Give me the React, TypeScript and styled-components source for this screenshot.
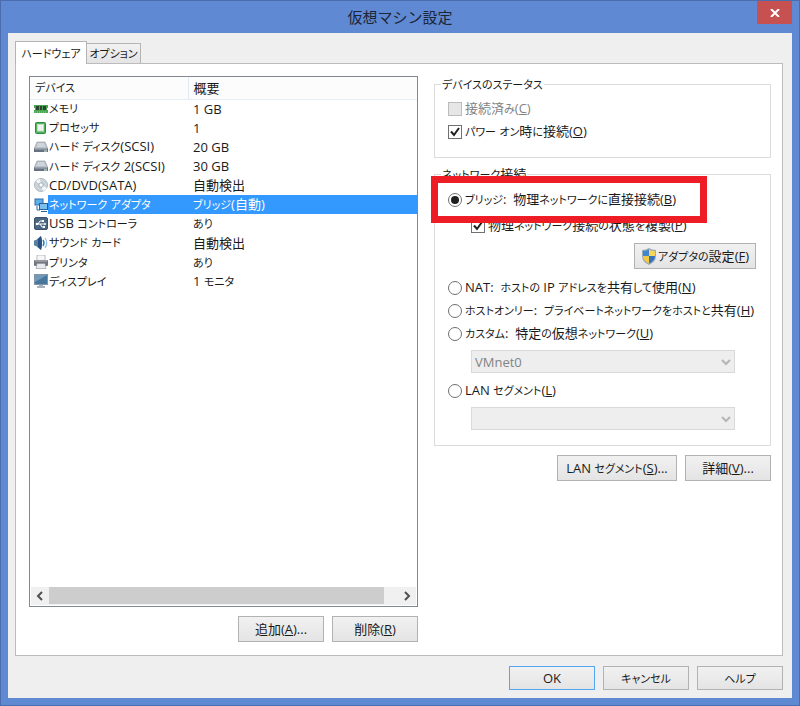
import React, { useState } from "react";
import styled, { createGlobalStyle, css } from "styled-components";

const GlobalStyle = createGlobalStyle`
  *, *::before, *::after { box-sizing: border-box; }
  body { margin: 0; }
  body, button, input, select {
    font: 13px/18px "Open Sans", "Noto Sans CJK JP", sans-serif;
    font-feature-settings: "palt";
    color: #1a1a1a;
  }
`;

const Window = styled.main`
  display: flex;
  flex-direction: column;
  min-height: 100vh;
  padding: 0 7px 7px;
  border: 1px solid #4b6dab;
  background: #6089d3;
`;

const TitleBar = styled.header`
  display: grid;
  grid-template-columns: 35px 1fr 35px;
  height: 32px;
  flex: none;
`;

const Title = styled.h1`
  grid-column: 2;
  margin: 0;
  font-size: 15px;
  line-height: 32px;
  font-weight: 400;
  font-feature-settings: normal;
  text-align: center;
  color: #1d2638;
`;

const CloseButton = styled.button`
  display: grid;
  place-items: center;
  height: 23px;
  padding: 0;
  border: 0;
  background: #c75050;
`;

const Client = styled.div`
  display: flex;
  flex-direction: column;
  flex: 1;
  padding: 8px 9px 8px 7px;
  background: #efefef;
`;

const TabList = styled.div`
  display: flex;
  align-items: flex-end;
  height: 22px;
`;

const Tab = styled.button<{ $active?: boolean }>`
  height: 20px;
  width: 54px;
  padding: 0;
  border: 1px solid #b4b4b4;
  border-left: 0;
  border-bottom: 0;
  background: linear-gradient(#f2f2f2, #e4e4e4);
  white-space: nowrap;
  ${(p) =>
    p.$active &&
    css`
      z-index: 1;
      width: 72px;
      height: 23px;
      margin-bottom: -1px;
      border-left: 1px solid #b4b4b4;
      background: #fff;
    `}
`;

const Panel = styled.section`
  display: grid;
  grid-template-columns: 389fr 337fr;
  column-gap: 16px;
  flex: 1;
  padding: 12px 11px 13px 13px;
  border: 1px solid #bcbcbc;
  background: #fff;
`;

const Column = styled.div`
  display: flex;
  flex-direction: column;
  min-width: 0;
`;

const ListBox = styled.div`
  display: flex;
  flex-direction: column;
  flex: 1;
  border: 1px solid #828790;
`;

const ListBody = styled.div`
  flex: 1;
`;

const DeviceTable = styled.table`
  width: 100%;
  height: 214px;
  table-layout: fixed;
  border-collapse: collapse;
  text-align: left;
  white-space: nowrap;
`;

const HeadCell = styled.th<{ $first?: boolean }>`
  width: ${(p) => (p.$first ? "158px" : "auto")};
  height: 22px;
  padding: 0 5px;
  border-bottom: 1px solid #e3eef7;
  border-right: ${(p) => (p.$first ? "1px solid #dfeaf5" : "0")};
  background: #fcfcfc;
  font-weight: 400;
`;

const DeviceRow = styled.tr<{ $selected: boolean }>`
  height: 19px;
  color: ${(p) => (p.$selected ? "#fff" : "#1a1a1a")};
  td {
    padding: 0 5px;
    background: ${(p) => (p.$selected ? "#3399ff" : "#fff")};
  }
  td:first-child {
    padding: 0 0 0 19px;
    background: ${(p) => (p.$selected ? "linear-gradient(90deg, #fff 18px, #3399ff 18px)" : "#fff")};
  }
`;

const DeviceName = styled.span`
  display: flex;
  align-items: center;
  gap: 1px;
  height: 18px;
  margin-left: -15px;
  svg { flex: none; }
`;

const ScrollBar = styled.div`
  display: flex;
  height: 18px;
  margin: 0 1px 1px;
  background: #f0f0f0;
`;

const ScrollArrow = styled.button`
  display: grid;
  place-items: center;
  width: 18px;
  padding: 0;
  border: 0;
  background: none;
`;

const ScrollTrack = styled.div`
  flex: 1;
`;

const ScrollThumb = styled.div`
  width: 96%;
  height: 17px;
  background: #cdcdcd;
`;

const ButtonRow = styled.div`
  display: flex;
  justify-content: flex-end;
  gap: 8px;
  margin-top: 9px;
`;

const DialogButtons = styled(ButtonRow)`
  margin-top: 10px;
`;

const PushButton = styled.button<{ $wide?: boolean; $short?: boolean; $primary?: boolean }>`
  display: flex;
  align-items: center;
  justify-content: center;
  gap: 1px;
  width: ${(p) => (p.$wide ? "120px" : "86px")};
  height: ${(p) => (p.$short ? "24px" : "26px")};
  padding: 0;
  border: 1px solid ${(p) => (p.$primary ? "#55a5f5" : "#b2b2b2")};
  background: linear-gradient(#f1f1f1, #e4e4e4);
  white-space: nowrap;
`;

const Group = styled.fieldset<{ $tight?: boolean }>`
  display: flex;
  flex-direction: column;
  min-width: 0;
  margin: 0;
  padding: 4px 14px ${(p) => (p.$tight ? "9px" : "14px")} 13px;
  border: 1px solid #dcdcdc;
  & + & { margin-top: 8px; }
`;

const Legend = styled.legend`
  margin-left: -7px;
  padding: 0 1px;
  line-height: 16px;
`;

const Option = styled.label<{ $indent?: boolean; $disabled?: boolean }>`
  display: flex;
  align-items: center;
  gap: 3px;
  height: 23px;
  margin-left: ${(p) => (p.$indent ? "23px" : "0")};
  color: ${(p) => (p.$disabled ? "#838383" : "#1a1a1a")};
  white-space: pre;
`;

const Highlight = styled.div`
  position: relative;
  margin: 1px 0 3px;
  &::after {
    content: "";
    position: absolute;
    inset: -12px 49px -12px -17px;
    border: 7px solid #ee1c25;
    pointer-events: none;
  }
`;

const Stack = styled.span`
  display: grid;
  flex: none;
  align-items: center;
  > * { grid-area: 1 / 1; }
  > svg { justify-self: center; pointer-events: none; }
`;

const CheckInput = styled.input`
  appearance: none;
  width: 14px;
  height: 14px;
  margin: 0;
  border: 1px solid #707070;
  background: #fff;
  &:disabled { border-color: #bcbcbc; background: #e6e6e6; }
  & + svg { visibility: hidden; }
  &:checked + svg { visibility: visible; }
`;

const RadioInput = styled.input`
  appearance: none;
  display: grid;
  flex: none;
  place-items: center;
  width: 14px;
  height: 14px;
  margin: 0;
  border: 1px solid #707070;
  border-radius: 50%;
  background: #fff;
  &:checked::before {
    content: "";
    width: 8px;
    height: 8px;
    border-radius: 50%;
    background: #1f1f1f;
  }
`;

const AdapterButton = styled(PushButton)`
  align-self: flex-end;
  width: 122px;
  margin: 6px 0 7px;
`;

const SelectBox = styled.div`
  display: grid;
  align-items: center;
  margin: 5px 21px 6px 23px;
  > * { grid-area: 1 / 1; }
  > svg { justify-self: end; margin-right: 4px; pointer-events: none; }
`;

const Select = styled.select`
  appearance: none;
  height: 23px;
  padding: 0 3px;
  border: 1px solid #d9d9d9;
  border-radius: 0;
  background: #eee;
  &:disabled { color: #838383; opacity: 1; }
`;

const Kana = styled.span`
  font-size: 11px;
`;

// Kana is set one step smaller than the kanji and Latin text around it.
const Text = ({ children }: { children: string }) => (
  <span>
    {children
      .split(/([\u3040-\u30ff]+)/)
      .map((part, i) => (i % 2 ? <Kana key={i}>{part}</Kana> : part))}
  </span>
);

const Chevron = ({ d, color }: { d: string; color: string }) => (
  <svg width="10" height="10" viewBox="0 0 10 10" fill="none" stroke={color} strokeWidth="2" aria-hidden="true">
    <path d={d} />
  </svg>
);

const icons: Record<string, React.ReactNode> = {
  memory: (
    <>
      <path d="M0 3h14v3h-1v2h1v3H0V8h1V6H0z" fill="#4aa552" />
      <path d="M2 4h3v4H2zM6 4h2v4H6zM9 4h3v4H9z" fill="#2c4430" />
      <path d="M1 10h12" stroke="#9bd27f" strokeDasharray="1 1" />
    </>
  ),
  cpu: (
    <>
      <rect x="1.5" y="1.5" width="10" height="11" rx="1" fill="#4fb35c" stroke="#2c8a40" />
      <rect x="3.500" y="3.500" width="6" height="6.500" fill="#f1f1ee" stroke="#c4dcc0" />
    </>
  ),
  disk: (
    <>
      <path d="M3 2h8l3 7H0z" fill="#b9c0c8" stroke="#8f98a3" strokeWidth=".6" />
      <path d="M4 3h6l1.500 4h-9z" fill="#d0d5db" />
      <path d="M0 8.500h14V12H0z" fill="#66707e" />
      <path d="M1 9h12" stroke="#aab2bd" />
      <path d="M10 11h3" stroke="#d8f3da" />
    </>
  ),
  disc: (
    <>
      <circle cx="7" cy="7" r="6.500" fill="#ccd4db" stroke="#9faab4" strokeWidth=".8" />
      <path d="M7 7L2 3a6 6 0 0 1 4-2zM7 7l6 3a6 6 0 0 1-4 3z" fill="#f7f9fa" />
      <circle cx="7" cy="7" r="2.200" fill="#fff" stroke="#8d9aa6" strokeWidth=".8" />
    </>
  ),
  network: (
    <>
      <rect x="1" y="1" width="8" height="6" fill="#5eaeea" stroke="#2c6ca5" />
      <path d="M3 8v4h3" fill="none" stroke="#2c6ca5" />
      <rect x="5.500" y="5.500" width="8" height="6" fill="#78c0f2" stroke="#285f94" />
      <path d="M7 13.500h6" stroke="#285f94" />
    </>
  ),
  usb: (
    <>
      <rect x="0.500" y="0.500" width="13" height="12" rx="1.500" fill="#4a6682" stroke="#3a536d" />
      <path d="M2 7h9M4 7l2-3h3M6 7l2 3h2" fill="none" stroke="#fff" />
      <circle cx="3" cy="7" r="1.300" fill="#fff" />
      <path d="M10.500 5.500l2 1.500-2 1.500zM8 3h2v2H8zM9 9h2v2H9z" fill="#fff" />
    </>
  ),
  sound: (
    <>
      <path d="M0 5q0-1 2-1l5-4q2 7 0 14L2 10Q0 10 0 9z" fill="#577fa5" />
      <path d="M4 3l3-3q2 7 0 14L4 11z" fill="#27517e" />
      <path d="M9 4q2 3 0 6" fill="none" stroke="#287bc2" strokeWidth="1.400" />
      <path d="M11 2q3.500 5 0 10" fill="none" stroke="#8fbde1" strokeWidth="1.200" />
    </>
  ),
  printer: (
    <>
      <path d="M3 0h8v6H3z" fill="#f7f7f8" stroke="#a2a2a8" strokeWidth=".7" />
      <rect x="0" y="5" width="14" height="6" rx="1" fill="#74767f" />
      <path d="M1 6h12" stroke="#b8bac2" />
      <path d="M3 8.500h8l1 5H2z" fill="#e9eaef" stroke="#8e9098" strokeWidth=".6" />
    </>
  ),
  display: (
    <>
      <rect x="0.500" y="0.500" width="13" height="10" fill="#48779e" stroke="#8296a8" />
      <path d="M1 1h12L1 8z" fill="#7399ba" />
      <path d="M5 11h4v1h2v2H3v-2h2z" fill="#a6b1bc" />
    </>
  ),
};

const DeviceIcon = ({ name }: { name: string }) => (
  <svg width="14" height="14" viewBox="0 0 14 14" aria-hidden="true">
    {icons[name]}
  </svg>
);

const Shield = () => (
  <svg width="16" height="17" viewBox="0 0 16 17" aria-hidden="true">
    <path d="M8 0q3 2 7 2v6q0 6-7 9Q1 14 1 8V2q4 0 7-2z" fill="#9aabba" />
    <path d="M8 1.500V8H2V3q3 0 6-1.500z" fill="#3f86cf" />
    <path d="M8 1.500Q11 3 14 3v5H8z" fill="#f8d45a" />
    <path d="M2 8h6v7.500Q2 13 2 8z" fill="#f5c843" />
    <path d="M14 8H8v7.500Q14 13 14 8z" fill="#2f72bd" />
  </svg>
);

const Tick = () => (
  <svg width="10" height="10" viewBox="0 0 10 10" fill="none" stroke="#1f1f1f" strokeWidth="2" aria-hidden="true">
    <path d="M1 4.500L4 8l5-7" />
  </svg>
);

const devices = [
  ["memory", "メモリ", "1 GB"],
  ["cpu", "プロセッサ", "1"],
  ["disk", "ハード ディスク(SCSI)", "20 GB"],
  ["disk", "ハード ディスク 2(SCSI)", "30 GB"],
  ["disc", "CD/DVD(SATA)", "自動検出"],
  ["network", "ネットワーク アダプタ", "ブリッジ(自動)"],
  ["usb", "USB コントローラ", "あり"],
  ["sound", "サウンド カード", "自動検出"],
  ["printer", "プリンタ", "あり"],
  ["display", "ディスプレイ", "1 モニタ"],
];

const Accel = ({ k }: { k: string }) => (
  <>
    (<u>{k}</u>)
  </>
);

type CheckProps = { text: string; k: string; checked?: boolean; disabled?: boolean; indent?: boolean };

const Check = ({ text, k, checked, disabled, indent }: CheckProps) => (
  <Option $indent={indent} $disabled={disabled}>
    <Stack>
      <CheckInput type="checkbox" defaultChecked={checked} disabled={disabled} />
      <Tick />
    </Stack>
    <span><Text>{text}</Text><Accel k={k} /></span>
  </Option>
);

export default function App() {
  const [selected, setSelected] = useState(5);
  const [mode, setMode] = useState("B");

  const radio = (text: string, k: string) => (
    <Option>
      <RadioInput type="radio" name="connection" checked={mode === k} onChange={() => setMode(k)} />
      <span><Text>{text}</Text><Accel k={k} /></span>
    </Option>
  );

  return (
    <Window>
      <GlobalStyle />
      <TitleBar>
        <Title>仮想マシン設定</Title>
        <CloseButton aria-label="閉じる">
          <svg width="10" height="8" viewBox="0 0 10 8" stroke="#fff" strokeWidth="2" aria-hidden="true">
            <path d="M1 0l8 8M9 0L1 8" />
          </svg>
        </CloseButton>
      </TitleBar>
      <Client>
        <TabList role="tablist">
          <Tab role="tab" aria-selected="true" $active><Text>ハードウェア</Text></Tab>
          <Tab role="tab" aria-selected="false"><Text>オプション</Text></Tab>
        </TabList>
        <Panel role="tabpanel">
          <Column>
            <ListBox>
              <ListBody>
                <DeviceTable>
                  <thead>
                    <tr>
                      <HeadCell $first><Text>デバイス</Text></HeadCell>
                      <HeadCell>概要</HeadCell>
                    </tr>
                  </thead>
                  <tbody>
                    {devices.map(([icon, name, summary], i) => (
                      <DeviceRow key={name} $selected={i === selected} onClick={() => setSelected(i)}>
                        <td>
                          <DeviceName>
                            <DeviceIcon name={icon} />
                            <Text>{name}</Text>
                          </DeviceName>
                        </td>
                        <td><Text>{summary}</Text></td>
                      </DeviceRow>
                    ))}
                  </tbody>
                </DeviceTable>
              </ListBody>
              <ScrollBar>
                <ScrollArrow aria-label="左へ"><Chevron d="M7 1L3 5l4 4" color="#505050" /></ScrollArrow>
                <ScrollTrack><ScrollThumb /></ScrollTrack>
                <ScrollArrow aria-label="右へ"><Chevron d="M3 1l4 4-4 4" color="#505050" /></ScrollArrow>
              </ScrollBar>
            </ListBox>
            <ButtonRow>
              <PushButton><span>追加<Accel k="A" />...</span></PushButton>
              <PushButton><span>削除<Accel k="R" /></span></PushButton>
            </ButtonRow>
          </Column>
          <Column>
            <Group>
              <Legend><Text>デバイスのステータス</Text></Legend>
              <Check text="接続済み" k="C" disabled />
              <Check text="パワー オン時に接続" k="O" checked />
            </Group>
            <Group $tight>
              <Legend><Text>ネットワーク接続</Text></Legend>
              <Highlight>{radio("ブリッジ:  物理ネットワークに直接接続", "B")}</Highlight>
              <Check text="物理ネットワーク接続の状態を複製" k="P" checked indent />
              <AdapterButton>
                <Shield />
                <span><Text>アダプタの設定</Text><Accel k="F" /></span>
              </AdapterButton>
              {radio("NAT:  ホストの IP アドレスを共有して使用", "N")}
              {radio("ホストオンリー:  プライベートネットワークをホストと共有", "H")}
              {radio("カスタム:  特定の仮想ネットワーク", "U")}
              <SelectBox>
                <Select disabled aria-label="仮想ネットワーク"><option>VMnet0</option></Select>
                <Chevron d="M1 3l4 4 4-4" color="#b5b5b5" />
              </SelectBox>
              {radio("LAN セグメント", "L")}
              <SelectBox>
                <Select disabled aria-label="LAN セグメント"><option></option></Select>
                <Chevron d="M1 3l4 4 4-4" color="#b5b5b5" />
              </SelectBox>
            </Group>
            <ButtonRow>
              <PushButton $wide><span><Text>LAN セグメント</Text><Accel k="S" />...</span></PushButton>
              <PushButton><span>詳細<Accel k="V" />...</span></PushButton>
            </ButtonRow>
          </Column>
        </Panel>
        <DialogButtons>
          <PushButton $short $primary>OK</PushButton>
          <PushButton $short><Text>キャンセル</Text></PushButton>
          <PushButton $short><Text>ヘルプ</Text></PushButton>
        </DialogButtons>
      </Client>
    </Window>
  );
}
